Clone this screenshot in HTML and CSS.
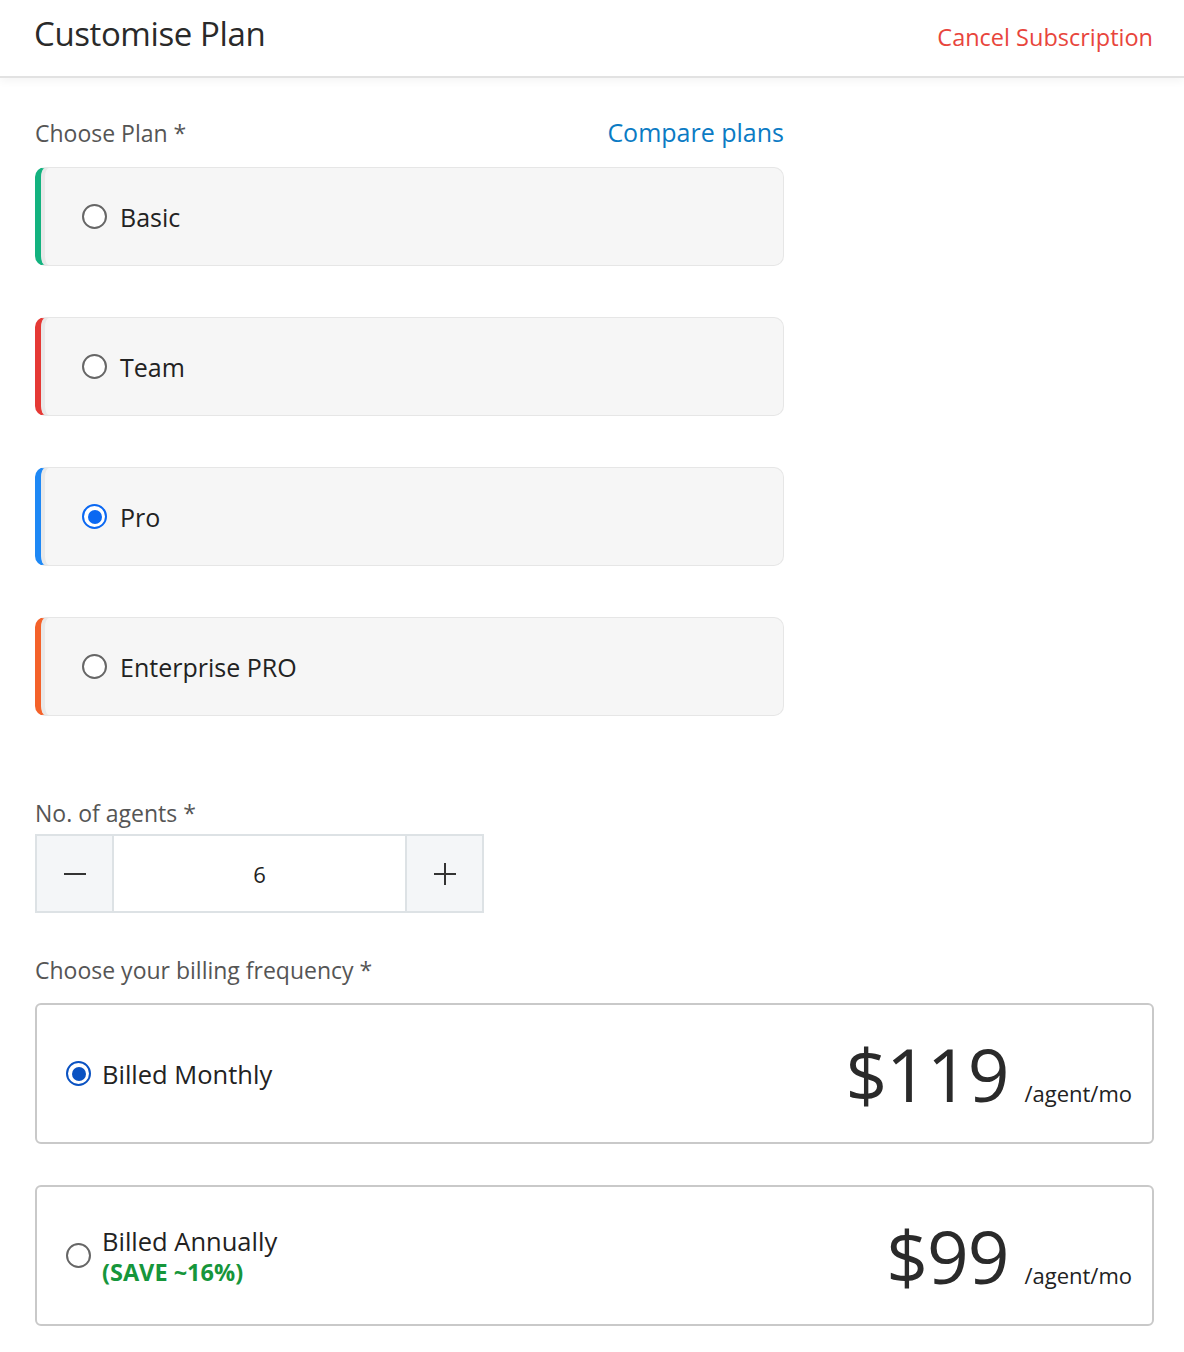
FILE: index.html
```html
<!DOCTYPE html>
<html lang="en">
<head>
<meta charset="utf-8">
<title>Customise Plan</title>
<link rel="stylesheet" href="styles.css">
</head>
<body>
<header class="topbar">
  <h1 class="title">Customise Plan</h1>
  <a class="cancel" href="#">Cancel Subscription</a>
</header>
<main class="content">
  <div class="plan-head">
    <span class="label">Choose Plan *</span>
    <a class="compare" href="#">Compare plans</a>
  </div>
  <div class="plans">
    <div class="plan plan-basic"><span class="radio"></span><span class="plan-name">Basic</span></div>
    <div class="plan plan-team"><span class="radio"></span><span class="plan-name">Team</span></div>
    <div class="plan plan-pro"><span class="radio checked"></span><span class="plan-name">Pro</span></div>
    <div class="plan plan-ent"><span class="radio"></span><span class="plan-name">Enterprise PRO</span></div>
  </div>

  <div class="label agents-label">No. of agents *</div>
  <div class="stepper">
    <div class="step-btn">
      <svg width="22" height="22" viewBox="0 0 22 22"><path d="M0 11H22" stroke="#333" stroke-width="2"/></svg>
    </div>
    <div class="step-value">6</div>
    <div class="step-btn">
      <svg width="22" height="22" viewBox="0 0 22 22"><path d="M0 11H22M11 0V22" stroke="#333" stroke-width="2"/></svg>
    </div>
  </div>

  <div class="label billing-label">Choose your billing frequency *</div>
  <div class="billing">
    <div class="bill-card">
      <div class="bill-left">
        <span class="radio checked dark"></span>
        <div class="bill-text"><span class="bill-name">Billed Monthly</span></div>
      </div>
      <div class="price"><span class="amount">$119</span><span class="unit">/agent/mo</span></div>
    </div>
    <div class="bill-card">
      <div class="bill-left">
        <span class="radio"></span>
        <div class="bill-text"><span class="bill-name">Billed Annually</span><span class="save">(SAVE ~16%)</span></div>
      </div>
      <div class="price"><span class="amount">$99</span><span class="unit">/agent/mo</span></div>
    </div>
  </div>
</main>
</body>
</html>
```

FILE: styles.css
```css
* { box-sizing: border-box; }
body {
  margin: 0;
  background: #fff;
  font-family: "Open Sans", "Noto Sans", sans-serif;
  color: #222;
}
a { text-decoration: none; }

.topbar {
  height: 78px;
  display: flex;
  justify-content: space-between;
  align-items: center;
  padding: 0 31px 10px 34px;
  border-bottom: 2px solid #e2e2e2;
  box-shadow: 0 4px 8px rgba(0,0,0,0.04);
}
.title {
  margin: 0;
  font-size: 33px;
  font-weight: 400;
  color: #2a2a2a;
  letter-spacing: -0.4px;
}
.cancel {
  color: #e8453c;
  font-size: 23.5px;
  margin-top: 8px;
}

.content {
  padding: 37px 0 40px 35px;
}
.label {
  font-size: 23px;
  color: #555;
}
.plan-head {
  width: 749px;
  display: flex;
  justify-content: space-between;
  align-items: baseline;
  margin-bottom: 18px;
}
.compare {
  color: #0b7bc4;
  font-size: 25px;
}

.plans {
  display: flex;
  flex-direction: column;
  gap: 51px;
  width: 749px;
}
.plan {
  height: 99px;
  background: #f6f6f6;
  border: 1px solid #e6e6e6;
  border-radius: 10px;
  border-left: 6px solid #13b27f;
  box-shadow: inset 4px 0 0 #e9e9e9;
  display: flex;
  align-items: center;
  padding-left: 41px;
  gap: 13px;
}
.plan-team { border-left-color: #e53935; }
.plan-pro { border-left-color: #1e88f5; }
.plan-ent { border-left-color: #f4622a; }
.plan-name {
  font-size: 25px;
  color: #222;
}

.radio {
  width: 25px;
  height: 25px;
  border-radius: 50%;
  border: 2px solid #666;
  background: #fff;
  flex: none;
  display: inline-flex;
  align-items: center;
  justify-content: center;
}
.radio.checked { border: 2.5px solid #0b68f2; }
.radio.checked::after {
  content: "";
  width: 14px;
  height: 14px;
  border-radius: 50%;
  background: #0b68f2;
}
.radio.dark { border-color: #0a52c2; }
.radio.dark::after { background: #0a52c2; }

.agents-label { margin-top: 81px; }
.stepper {
  margin-top: 5px;
  display: flex;
  width: 449px;
  height: 79px;
  border: 2px solid #dde2e5;
}
.step-btn {
  width: 75px;
  background: #f4f6f8;
  display: flex;
  align-items: center;
  justify-content: center;
}
.step-value {
  flex: 1;
  border-left: 2px solid #dde2e5;
  border-right: 2px solid #dde2e5;
  display: flex;
  align-items: center;
  justify-content: center;
  font-size: 22px;
  color: #222;
}

.billing-label { margin-top: 41px; }
.billing {
  margin-top: 17px;
  width: 1119px;
  display: flex;
  flex-direction: column;
  gap: 41px;
}
.bill-card {
  height: 141px;
  border: 2px solid #c9c9c9;
  border-radius: 6px;
  display: flex;
  align-items: center;
  justify-content: space-between;
  padding: 0 20px 0 29px;
}
.bill-left {
  display: flex;
  align-items: center;
  gap: 11px;
}
.bill-text {
  display: flex;
  flex-direction: column;
}
.bill-name { font-size: 25.5px; color: #222; line-height: 32px; }
.save {
  font-size: 23.5px;
  font-weight: 700;
  color: #16963b;
  line-height: 30px;
}
.price {
  display: flex;
  align-items: baseline;
  gap: 16px;
}
.amount {
  font-size: 73px;
  color: #2a2a2a;
  line-height: 1;
  letter-spacing: -1px;
}
.unit {
  font-size: 22px;
  color: #222;
}
```
